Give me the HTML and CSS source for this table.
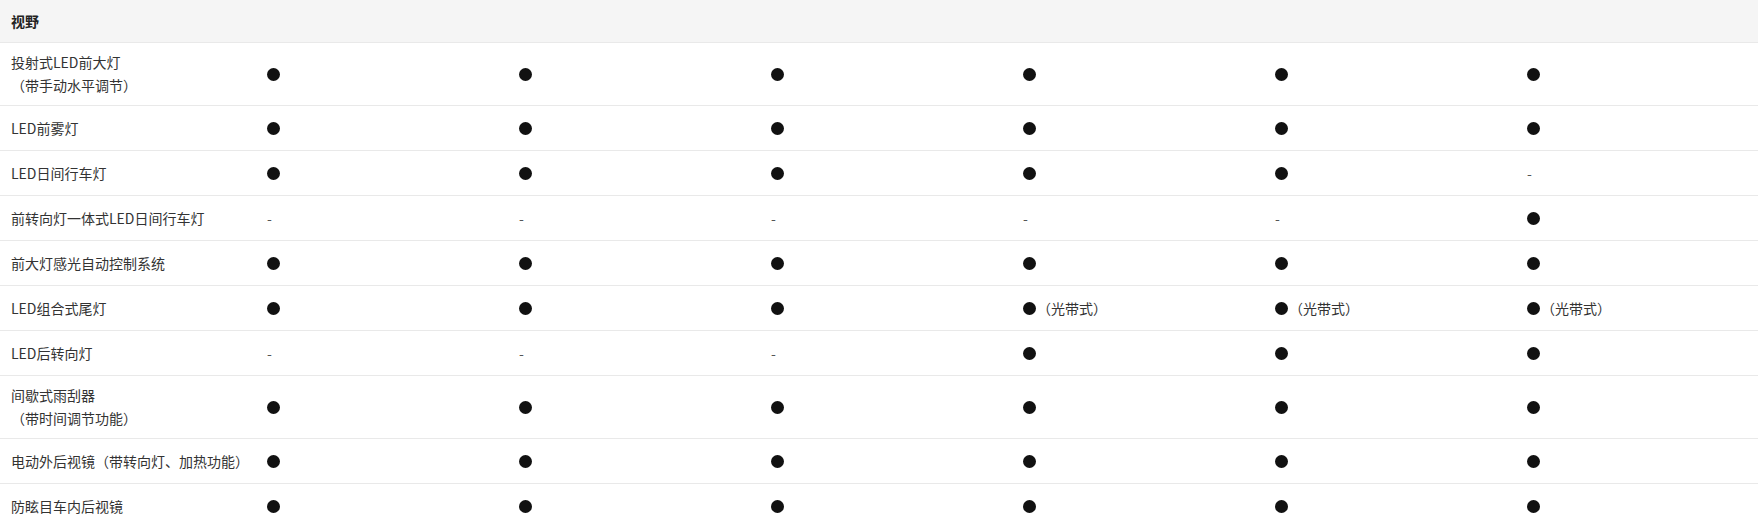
FILE: index.html
```html
<!DOCTYPE html>
<html lang="zh-CN">
<head>
<meta charset="utf-8">
<title>视野</title>
<link rel="stylesheet" href="styles.css">
</head>
<body>
<div class="spec">
  <div class="section-head">视野</div>

  <div class="row">
    <div class="label">投射式LED前大灯<br>（带手动水平调节）</div>
    <div class="val"><span class="dot"></span></div>
    <div class="val"><span class="dot"></span></div>
    <div class="val"><span class="dot"></span></div>
    <div class="val"><span class="dot"></span></div>
    <div class="val"><span class="dot"></span></div>
    <div class="val"><span class="dot"></span></div>
  </div>

  <div class="row">
    <div class="label">LED前雾灯</div>
    <div class="val"><span class="dot"></span></div>
    <div class="val"><span class="dot"></span></div>
    <div class="val"><span class="dot"></span></div>
    <div class="val"><span class="dot"></span></div>
    <div class="val"><span class="dot"></span></div>
    <div class="val"><span class="dot"></span></div>
  </div>

  <div class="row">
    <div class="label">LED日间行车灯</div>
    <div class="val"><span class="dot"></span></div>
    <div class="val"><span class="dot"></span></div>
    <div class="val"><span class="dot"></span></div>
    <div class="val"><span class="dot"></span></div>
    <div class="val"><span class="dot"></span></div>
    <div class="val"><span class="dash">-</span></div>
  </div>

  <div class="row">
    <div class="label">前转向灯一体式LED日间行车灯</div>
    <div class="val"><span class="dash">-</span></div>
    <div class="val"><span class="dash">-</span></div>
    <div class="val"><span class="dash">-</span></div>
    <div class="val"><span class="dash">-</span></div>
    <div class="val"><span class="dash">-</span></div>
    <div class="val"><span class="dot"></span></div>
  </div>

  <div class="row">
    <div class="label">前大灯感光自动控制系统</div>
    <div class="val"><span class="dot"></span></div>
    <div class="val"><span class="dot"></span></div>
    <div class="val"><span class="dot"></span></div>
    <div class="val"><span class="dot"></span></div>
    <div class="val"><span class="dot"></span></div>
    <div class="val"><span class="dot"></span></div>
  </div>

  <div class="row">
    <div class="label">LED组合式尾灯</div>
    <div class="val"><span class="dot"></span></div>
    <div class="val"><span class="dot"></span></div>
    <div class="val"><span class="dot"></span></div>
    <div class="val"><span class="dot"></span><span class="note">（光带式）</span></div>
    <div class="val"><span class="dot"></span><span class="note">（光带式）</span></div>
    <div class="val"><span class="dot"></span><span class="note">（光带式）</span></div>
  </div>

  <div class="row">
    <div class="label">LED后转向灯</div>
    <div class="val"><span class="dash">-</span></div>
    <div class="val"><span class="dash">-</span></div>
    <div class="val"><span class="dash">-</span></div>
    <div class="val"><span class="dot"></span></div>
    <div class="val"><span class="dot"></span></div>
    <div class="val"><span class="dot"></span></div>
  </div>

  <div class="row">
    <div class="label">间歇式雨刮器<br>（带时间调节功能）</div>
    <div class="val"><span class="dot"></span></div>
    <div class="val"><span class="dot"></span></div>
    <div class="val"><span class="dot"></span></div>
    <div class="val"><span class="dot"></span></div>
    <div class="val"><span class="dot"></span></div>
    <div class="val"><span class="dot"></span></div>
  </div>

  <div class="row">
    <div class="label">电动外后视镜（带转向灯、加热功能）</div>
    <div class="val"><span class="dot"></span></div>
    <div class="val"><span class="dot"></span></div>
    <div class="val"><span class="dot"></span></div>
    <div class="val"><span class="dot"></span></div>
    <div class="val"><span class="dot"></span></div>
    <div class="val"><span class="dot"></span></div>
  </div>

  <div class="row">
    <div class="label">防眩目车内后视镜</div>
    <div class="val"><span class="dot"></span></div>
    <div class="val"><span class="dot"></span></div>
    <div class="val"><span class="dot"></span></div>
    <div class="val"><span class="dot"></span></div>
    <div class="val"><span class="dot"></span></div>
    <div class="val"><span class="dot"></span></div>
  </div>
</div>
</body>
</html>
```

FILE: styles.css
```css
html, body {
  margin: 0;
  padding: 0;
  background: #ffffff;
  overflow: hidden;
}

body {
  font-family: "Noto Sans CJK SC", "Noto Sans", sans-serif;
  font-size: 14px;
  color: #333333;
}

.spec {
  width: 1758px;
}

.section-head {
  height: 42px;
  display: flex;
  align-items: center;
  padding-left: 11px;
  background: #f5f5f5;
  border-bottom: 1px solid #e9e9e9;
  font-weight: bold;
  color: #222222;
}

.row {
  display: grid;
  grid-template-columns: 246px repeat(6, 252px);
  border-bottom: 1px solid #e9e9e9;
}

.label,
.val {
  box-sizing: border-box;
  min-height: 44px;
  padding: 8px 0;
  display: flex;
  align-items: center;
  line-height: 23px;
}

.label {
  padding-left: 11px;
}

.val {
  padding-left: 21px;
}

.dot {
  width: 13px;
  height: 13px;
  border-radius: 50%;
  background: #111111;
  flex: none;
}

.note {
  margin-left: 1px;
}

.dash {
  color: #555555;
}
```
